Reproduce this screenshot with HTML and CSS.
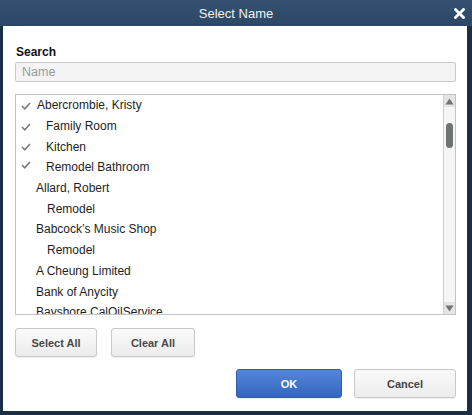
FILE: index.html
```html
<!DOCTYPE html>
<html>
<head>
<meta charset="utf-8">
<link rel="stylesheet" href="styles.css">
</head>
<body>
<div class="dialog">
  <div class="titlebar">
    <span class="title">Select Name</span>
    <span class="close"><svg width="11" height="11" viewBox="0 0 11 11"><path d="M1.5 1.5 L9.5 9.5 M9.5 1.5 L1.5 9.5" stroke="#fff" stroke-width="2.8" stroke-linecap="square"/></svg></span>
  </div>
  <div class="body">
    <div class="label">Search</div>
    <div class="input">Name</div>
    <div class="list">
      <div class="rows">
        <div class="row"><span class="chk"><svg width="10" height="8" viewBox="0 0 10 8"><path d="M1 4 L3.8 6.8 L9 1" fill="none" stroke="#7a7a7a" stroke-width="1.6"/></svg></span><span class="txt">Abercrombie, Kristy</span></div>
        <div class="row"><span class="chk"><svg width="10" height="8" viewBox="0 0 10 8"><path d="M1 4 L3.8 6.8 L9 1" fill="none" stroke="#7a7a7a" stroke-width="1.6"/></svg></span><span class="txt sub">Family Room</span></div>
        <div class="row"><span class="chk"><svg width="10" height="8" viewBox="0 0 10 8"><path d="M1 4 L3.8 6.8 L9 1" fill="none" stroke="#7a7a7a" stroke-width="1.6"/></svg></span><span class="txt sub">Kitchen</span></div>
        <div class="row"><span class="chk up"><svg width="10" height="8" viewBox="0 0 10 8"><path d="M1 4 L3.8 6.8 L9 1" fill="none" stroke="#7a7a7a" stroke-width="1.6"/></svg></span><span class="txt sub">Remodel Bathroom</span></div>
        <div class="row"><span class="chk"></span><span class="txt top">Allard, Robert</span></div>
        <div class="row"><span class="chk"></span><span class="txt sub2">Remodel</span></div>
        <div class="row"><span class="chk"></span><span class="txt top">Babcock’s Music Shop</span></div>
        <div class="row"><span class="chk"></span><span class="txt sub2">Remodel</span></div>
        <div class="row"><span class="chk"></span><span class="txt top">A Cheung Limited</span></div>
        <div class="row"><span class="chk"></span><span class="txt top">Bank of Anycity</span></div>
        <div class="row"><span class="chk"></span><span class="txt top">Bayshore CalOilService</span></div>
      </div>
      <div class="scrollbar">
        <div class="arrow"><svg width="9" height="7" viewBox="0 0 9 7"><path d="M4.5 0.5 L8.5 6.5 L0.5 6.5 Z" fill="#6e7471"/></svg></div>
        <div class="track"><div class="thumb"></div></div>
        <div class="arrow"><svg width="9" height="7" viewBox="0 0 9 7"><path d="M0.5 0.5 L8.5 0.5 L4.5 6.5 Z" fill="#6e7471"/></svg></div>
      </div>
    </div>
    <div class="btnrow">
      <div class="btn sel">Select All</div>
      <div class="btn clr">Clear All</div>
    </div>
    <div class="actions">
      <div class="btn ok">OK</div>
      <div class="btn cancel">Cancel</div>
    </div>
  </div>
</div>
</body>
</html>
```
FILE: styles.css
```css
html, body {
  margin: 0;
  padding: 0;
  background: #1c2e43;
}
.dialog {
  width: 472px;
  height: 415px;
  box-sizing: border-box;
  border-left: 3px solid #1c2e43;
  border-right: 5px solid #1c2e43;
  border-bottom: 4px solid #1c2e43;
  display: flex;
  flex-direction: column;
  font-family: "Liberation Sans", Arial, sans-serif;
}
.titlebar {
  height: 26px;
  margin-left: -3px;
  margin-right: -5px;
  background: linear-gradient(#34516f, #2d4866);
  display: flex;
  align-items: center;
  justify-content: center;
  position: relative;
}
.title {
  color: #eef2f6;
  font-size: 13px;
}
.close {
  position: absolute;
  right: 7px;
  top: 8px;
  line-height: 0;
}
.body {
  flex: 1;
  background: #fff;
  padding: 19px 11px 0 12px;
  display: flex;
  flex-direction: column;
}
.label {
  font-size: 12px;
  font-weight: bold;
  line-height: 14px;
  color: #111;
  padding-left: 1px;
}
.input {
  margin-top: 3px;
  height: 20px;
  box-sizing: border-box;
  border: 1px solid #c9c9c9;
  border-radius: 2px;
  background: #f4f4f4;
  color: #9a9a9a;
  font-size: 12.5px;
  line-height: 18px;
  padding-left: 6px;
}
.list {
  margin-top: 12px;
  height: 221px;
  box-sizing: border-box;
  border: 1px solid #c3c3c3;
  display: flex;
  overflow: hidden;
}
.rows {
  flex: 1;
  padding-left: 5px;
}
.row {
  height: 20.7px;
  display: flex;
  align-items: center;
  font-size: 12px;
  color: #1e1e1e;
  white-space: nowrap;
}
.chk {
  width: 16px;
  flex: none;
  line-height: 0;
  padding-top: 1px;
}
.chk.up {
  padding-top: 0;
  margin-top: -4px;
}
.txt.sub {
  padding-left: 9px;
}
.txt.top {
  margin-left: -1px;
}
.txt.sub2 {
  padding-left: 10px;
}
.scrollbar {
  width: 11px;
  flex: none;
  border-left: 1px solid #cfcfcf;
  background: #f5f5f5;
  display: flex;
  flex-direction: column;
}
.arrow {
  height: 12px;
  background: #e4e4e4;
  display: flex;
  align-items: center;
  justify-content: center;
  line-height: 0;
}
.track {
  flex: 1;
  padding-top: 16px;
  display: flex;
  justify-content: center;
}
.thumb {
  width: 7px;
  height: 25px;
  border-radius: 4px;
  background: #6e7471;
}
.btnrow {
  margin-top: 13px;
  display: flex;
  gap: 14px;
}
.btn {
  height: 29px;
  box-sizing: border-box;
  border: 1px solid #c8c8c8;
  border-radius: 3px;
  background: linear-gradient(#fafafa, #ececec);
  font-size: 11px;
  font-weight: bold;
  color: #4a4a4a;
  display: flex;
  align-items: center;
  justify-content: center;
  box-shadow: 0 1px 0 rgba(0,0,0,0.06);
}
.btn.sel {
  width: 82px;
}
.btn.clr {
  width: 84px;
}
.actions {
  margin-top: 12px;
  display: flex;
  justify-content: flex-end;
  gap: 12px;
}
.btn.ok {
  width: 106px;
  background: linear-gradient(#5486d8, #3566bf);
  border-color: #2f5cab;
  color: #fff;
}
.btn.cancel {
  width: 102px;
  color: #444;
}
```
